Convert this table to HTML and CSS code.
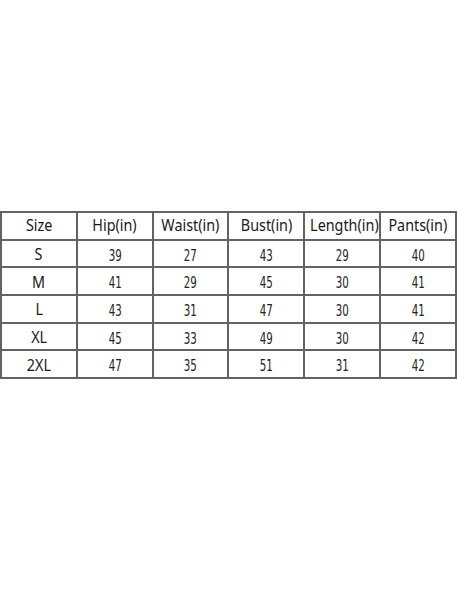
FILE: index.html
```html
<!DOCTYPE html>
<html>
<head>
<meta charset="utf-8">
<link rel="stylesheet" href="styles.css">
</head>
<body>
<div class="page">
  <table class="sizes">
    <thead>
      <tr>
        <th><span class="hd">Size</span></th>
        <th><span class="hd">Hip(in)</span></th>
        <th><span class="hd">Waist(in)</span></th>
        <th><span class="hd">Bust(in)</span></th>
        <th><span class="hd">Length(in)</span></th>
        <th><span class="hd">Pants(in)</span></th>
      </tr>
    </thead>
    <tbody>
      <tr><td><span class="hd sz">S</span></td><td><span class="num">39</span></td><td><span class="num">27</span></td><td><span class="num">43</span></td><td><span class="num">29</span></td><td><span class="num">40</span></td></tr>
      <tr><td><span class="hd sz">M</span></td><td><span class="num">41</span></td><td><span class="num">29</span></td><td><span class="num">45</span></td><td><span class="num">30</span></td><td><span class="num">41</span></td></tr>
      <tr><td><span class="hd sz">L</span></td><td><span class="num">43</span></td><td><span class="num">31</span></td><td><span class="num">47</span></td><td><span class="num">30</span></td><td><span class="num">41</span></td></tr>
      <tr><td><span class="hd sz">XL</span></td><td><span class="num">45</span></td><td><span class="num">33</span></td><td><span class="num">49</span></td><td><span class="num">30</span></td><td><span class="num">42</span></td></tr>
      <tr><td><span class="hd sz">2XL</span></td><td><span class="num">47</span></td><td><span class="num">35</span></td><td><span class="num">51</span></td><td><span class="num">31</span></td><td><span class="num">42</span></td></tr>
    </tbody>
  </table>
</div>
</body>
</html>
```

FILE: styles.css
```css
html, body {
  margin: 0;
  padding: 0;
  background: #ffffff;
}
.page {
  padding-top: 211px;
  width: 457px;
}
.sizes {
  width: 457px;
  border-collapse: collapse;
  table-layout: fixed;
  color: #1a1a1a;
}
.sizes th,
.sizes td {
  border: 2px solid #636363;
  height: 25.7px;
  padding: 0;
  text-align: center;
  vertical-align: middle;
  font-weight: normal;
  line-height: 1;
}
.hd {
  display: inline-block;
  font-family: "Noto Sans", sans-serif;
  font-size: 16.5px;
  transform: scaleX(0.87);
}
.sz {
  position: relative;
  top: 1px;
}
.num {
  display: inline-block;
  font-family: "DejaVu Sans", sans-serif;
  font-size: 16px;
  transform: scaleX(0.64);
  position: relative;
  top: 2px;
  color: #222;
}
```
